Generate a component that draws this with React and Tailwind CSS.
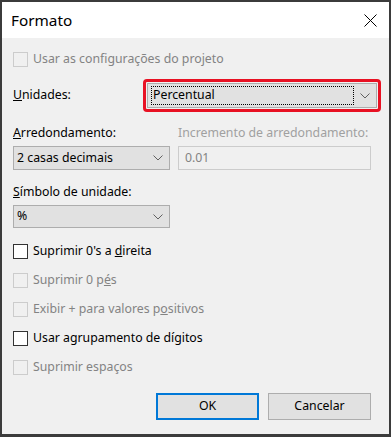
import React, { useState } from "react";

const font = { fontFamily: '"Noto Sans", "Open Sans", sans-serif' };

const Chevron = () => (
  <svg width="10" height="6" viewBox="0 0 10 6" className="shrink-0">
    <path d="M0.5 0.5 L5 5 L9.5 0.5" fill="none" stroke="#606060" strokeWidth="1" />
  </svg>
);

const Check = ({ label, disabled, checked, onToggle }) => (
  <div className="flex items-center h-[15px]">
    <button
      type="button"
      onClick={disabled ? undefined : onToggle}
      className={
        "w-[15px] h-[15px] border flex items-center justify-center " +
        (disabled ? "border-[#cccccc] bg-[#f0f0f0]" : "border-[#333333] bg-white")
      }
    >
      {checked && (
        <svg width="11" height="9" viewBox="0 0 11 9">
          <path d="M1 4.5 L4 7.5 L10 1" fill="none" stroke="#333" strokeWidth="1.4" />
        </svg>
      )}
    </button>
    <span className={"ml-[5px] text-[12.3px] leading-none " + (disabled ? "text-[#838383]" : "text-black")}>
      {label}
    </span>
  </div>
);

const Combo = ({ value, className = "" }) => (
  <div
    className={
      "flex items-center justify-between border border-[#adadad] bg-[#e1e1e1] pl-[3px] pr-[6px] text-[12.3px] text-black " +
      className
    }
  >
    <span>{value}</span>
    <Chevron />
  </div>
);

export default function App() {
  const [checks, setChecks] = useState({ zeros: false, group: false });

  return (
    <div
      style={font}
      className="w-[391px] h-[437px] border-t-2 border-l-2 border-r-2 border-b-[3px] border-[#3b3b3b] bg-[#f0f0f0] flex flex-col"
    >
      {/* title bar */}
      <div className="h-[36px] bg-white flex items-center justify-between pl-[9px] pr-[12px]">
        <span className="text-[15.3px] text-black">Formato</span>
        <svg width="13" height="13" viewBox="0 0 13 13">
          <path d="M0.5 0.5 L12.5 12.5 M12.5 0.5 L0.5 12.5" stroke="#000" strokeWidth="1" />
        </svg>
      </div>

      <div className="flex flex-col pl-[11px] pr-[8px]">
        <div className="mt-[14px]">
          <Check disabled label="Usar as configurações do projeto" />
        </div>

        <div className="mt-[12px] flex items-center h-[33px]">
          <span className="w-[130px] text-[12.3px] text-black">
            <span className="underline">U</span>nidades:
          </span>
          <div className="w-[238px] h-[33px] border-[3px] border-[#e81123] rounded-[4px] p-px">
            <div className="h-full flex items-center justify-between border border-[#adadad] bg-[#e1e1e1] pl-[3px] pr-[6px]">
              <div className="w-[203px] h-[19px] border border-dotted border-black flex items-center pl-px text-[12.3px] text-black">
                Percentual
              </div>
              <Chevron />
            </div>
          </div>
        </div>

        <div className="mt-[13px] flex text-[12.3px] leading-[16px]">
          <span className="w-[165px] text-black">
            <span className="underline">A</span>rredondamento:
          </span>
          <span className="text-[#a0a0a0]">Incremento de arredondamento:</span>
        </div>
        <div className="mt-[5px] flex">
          <Combo value="2 casas decimais" className="w-[157px] h-[24px]" />
          <div className="ml-[8px] w-[193px] h-[24px] border border-[#cccccc] bg-[#f0f0f0] flex items-center pl-[6px] text-[12.3px] text-[#838383]">
            0.01
          </div>
        </div>

        <div className="mt-[14px] text-[12.3px] leading-[16px] text-black">
          <span className="underline">S</span>ímbolo de unidade:
        </div>
        <Combo value="%" className="mt-[5px] w-[157px] h-[23px]" />

        <div className="mt-[16px] flex flex-col gap-[14px]">
          <Check
            label={
              <>
                Suprimir 0's a <span className="underline">d</span>ireita
              </>
            }
            checked={checks.zeros}
            onToggle={() => setChecks({ ...checks, zeros: !checks.zeros })}
          />
          <Check
            disabled
            label={
              <>
                Suprimir 0 p<span className="underline">é</span>s
              </>
            }
          />
          <Check
            disabled
            label={
              <>
                Exibir + para valores p<span className="underline">o</span>sitivos
              </>
            }
          />
          <Check
            label="Usar agrupamento de dígitos"
            checked={checks.group}
            onToggle={() => setChecks({ ...checks, group: !checks.group })}
          />
          <Check disabled label="Suprimir espaços" />
        </div>

        <div className="mt-[18px] flex justify-end gap-[9px] pr-[10px]">
          <button className="w-[103px] h-[27px] border-2 border-[#0078d7] bg-[#e1e1e1] text-[12.3px] text-black">
            OK
          </button>
          <button className="w-[103px] h-[27px] border border-[#adadad] bg-[#e1e1e1] text-[12.3px] text-black">
            Cancelar
          </button>
        </div>
      </div>
    </div>
  );
}
